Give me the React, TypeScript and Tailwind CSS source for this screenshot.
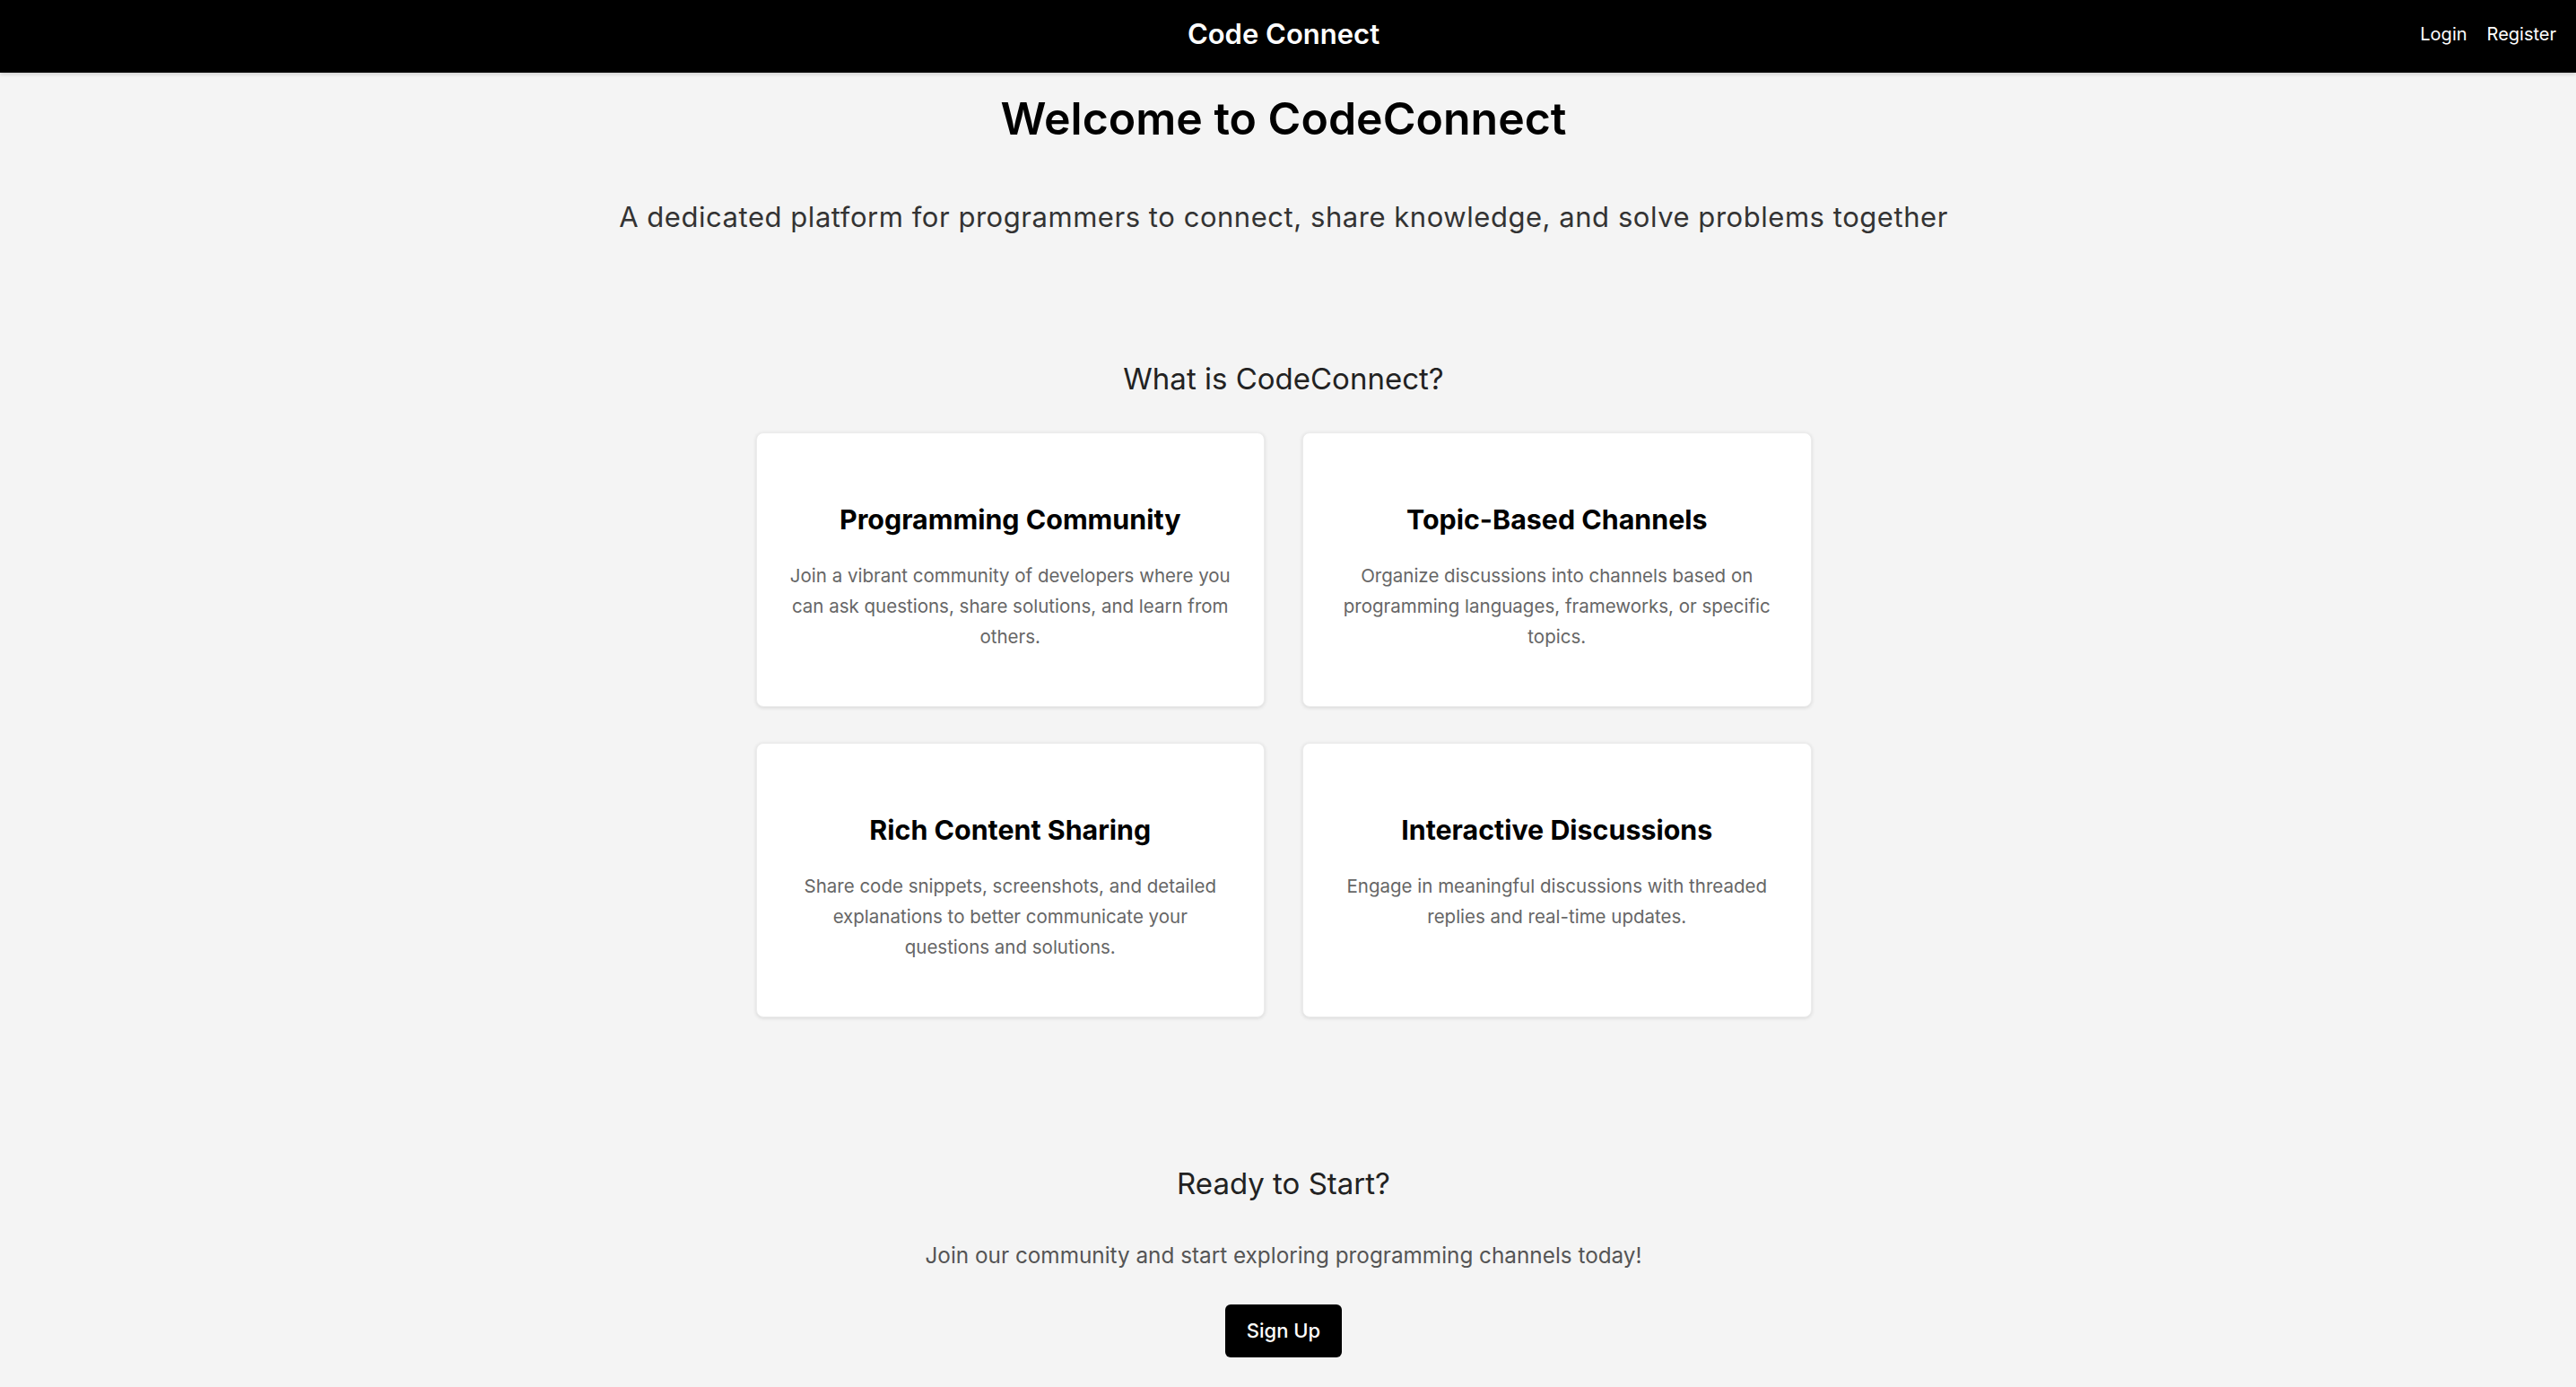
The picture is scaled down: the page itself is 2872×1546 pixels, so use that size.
const FEATURES = [
  {
    title: 'Programming Community',
    text: 'Join a vibrant community of developers where you can ask questions, share solutions, and learn from others.',
  },
  {
    title: 'Topic-Based Channels',
    text: 'Organize discussions into channels based on programming languages, frameworks, or specific topics.',
  },
  {
    title: 'Rich Content Sharing',
    text: 'Share code snippets, screenshots, and detailed explanations to better communicate your questions\u00a0and solutions.',
  },
  {
    title: 'Interactive Discussions',
    text: 'Engage in meaningful discussions with threaded replies and real-time updates.',
  },
];

function FeatureCard({ title, text }: { title: string; text: string }) {
  return (
    <div className="h-[306px] bg-white rounded-lg shadow-[0_1px_4px_rgba(0,0,0,0.12)] border border-[#ececec] px-[34px] pt-[72px] text-center">
      <h3 className="text-[30.4px] leading-[48px] font-bold text-black">{title}</h3>
      <p className="mt-[22px] text-[20.5px] leading-[34px] text-[#666]">{text}</p>
    </div>
  );
}

export default function App() {
  return (
    <div className="min-h-screen bg-[#f4f4f4] font-['Inter','Noto_Sans',sans-serif]">
      {/* Header */}
      <header className="relative h-[81px] bg-black flex items-center justify-center pr-[10px] pb-[5px] shadow-[0_2px_4px_rgba(0,0,0,0.15)]">
        <span className="text-white text-[31px] font-semibold">Code Connect</span>
        <nav className="absolute right-[22px] top-0 h-full pb-[5px] flex items-center gap-[22px] text-white text-[20px]">
          <a href="#">Login</a>
          <a href="#">Register</a>
        </nav>
      </header>

      <main className="flex flex-col items-center text-center pr-[10px]">
        {/* Hero */}
        <h1 className="mt-[18px] text-[50px] leading-[66px] font-semibold text-black">Welcome to CodeConnect</h1>
        <p className="mt-[55px] text-[31px] leading-[44px] tracking-[0.0175em] text-[#333]">
          A dedicated platform for programmers to connect, share knowledge, and solve problems together
        </p>

        {/* Features */}
        <h2 className="mt-[136px] text-[33px] leading-[44px] text-[#222]">What is CodeConnect?</h2>
        <div className="mt-[38px] grid grid-cols-2 gap-x-[42px] gap-y-[40px] w-[1177px]">
          {FEATURES.map((f) => (
            <FeatureCard key={f.title} title={f.title} text={f.text} />
          ))}
        </div>

        {/* Call to action */}
        <h2 className="mt-[163px] text-[33px] leading-[44px] text-[#222]">Ready to Start?</h2>
        <p className="mt-[38px] text-[24.3px] leading-[40px] text-[#555]">
          Join our community and start exploring programming channels today!
        </p>
        <button className="mt-[35px] w-[130px] h-[59px] bg-black text-white text-[22px] font-medium rounded-md">
          Sign Up
        </button>
      </main>
    </div>
  );
}
